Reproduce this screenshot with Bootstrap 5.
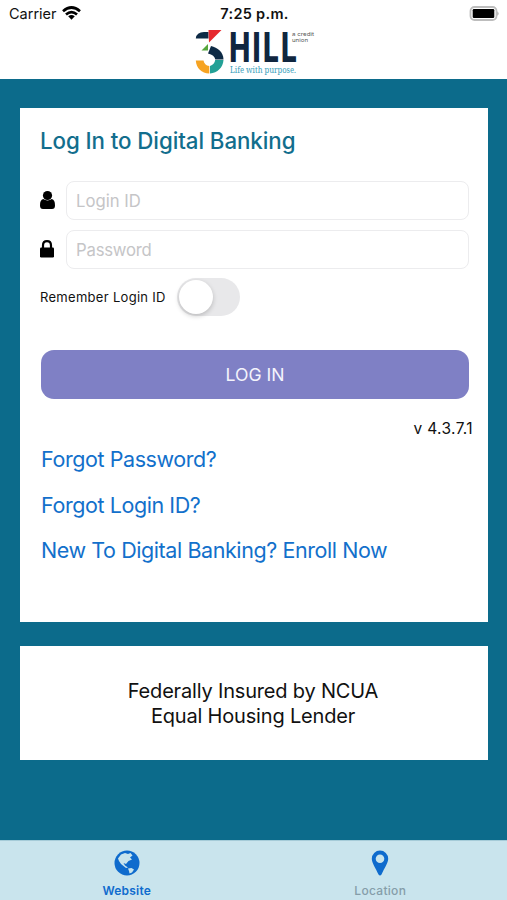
<!DOCTYPE html>
<html lang="en">
<head>
<meta charset="utf-8">
<meta name="viewport" content="width=device-width, initial-scale=1">
<title>Log In to Digital Banking</title>
<link href="https://cdn.jsdelivr.net/npm/bootstrap@5.3.0/dist/css/bootstrap.min.css" rel="stylesheet">
<style>
body{font-family:Inter,"Liberation Sans",sans-serif;background:#0c6b8b;color:#111;height:900px;overflow:hidden}
.top-area{height:79px}
.status-row{height:28px;font-size:14.5px;line-height:28px;padding:0 7px 0 9px}
.status-row>div{flex:1 1 0}
.status-row .battery{margin-top:-2px}
.wifi{margin:-3px 0 0 5px}
.clock{font-weight:600;font-size:14.5px;letter-spacing:.3px}
.brand-logo{display:block;margin:-1px auto 0 192px;overflow:visible}
.page-area{padding:29px 19px 0 20px;height:761px}
.panel{background:#fff}
.login-panel{height:514px;padding:0 19px 0 20px}
.info-panel{height:114px;margin-top:24px;font-size:20px;line-height:24.5px;padding:33px 2px 0 0;letter-spacing:-.18px}
.panel-title{font-size:22.3px;font-weight:500;line-height:30px;padding-top:18px;margin:0 0 25px;color:#126e8d;letter-spacing:-.07px}
.field-row{height:39px;margin-bottom:10px}
.field-icon{width:26px;flex:none}
.field-icon svg{display:block;margin-top:-2px}
.field-input{height:39px;border:1.5px solid #ececee;border-radius:8px;font-size:16.7px;padding:0 8px 0 9px}
.field-input::placeholder{color:#c5c5c7;opacity:1}
.field-pass{letter-spacing:-.2px}
.remember{height:38px;font-size:13px;letter-spacing:.3px;margin-top:-1px}
.remember-text{padding-top:2px}
.toggle{width:63px;height:38px;border-radius:19px;background:#e8e8ea;margin-left:11px;padding:2px}
.knob{width:34px;height:34px;border-radius:50%;background:#fff;box-shadow:0 2px 5px rgba(0,0,0,.2)}
.login-btn,.login-btn:hover{height:49px;background:#7f80c5;color:#f4f4fc;border:0;border-radius:13px;font-size:17.6px;margin:34px 0 0 1px;width:428px;padding-top:8px}
.version{font-size:15.5px;line-height:20px;margin:20px -4px 0 0;letter-spacing:.35px}
.link-list{padding-top:5px}
.link-line{color:#1270cb;font-size:21.5px;line-height:30px;margin:0 0 15.5px 1px;display:block;width:max-content;letter-spacing:-.42px}
.tabs{height:60px;background:#c9e4ed;border-top:1px solid #a5cbd8}
.tab{flex:1 1 0;font-size:12px;line-height:16px;padding-top:9px;letter-spacing:.2px}
.tab svg{display:block;margin:0 auto 7px}
.tab-on{color:#0f6bcd;font-weight:600}
.tab-off{color:#859da9;font-weight:500;letter-spacing:.3px}
</style>
<script src="https://cdn.jsdelivr.net/npm/bootstrap@5.3.0/dist/js/bootstrap.bundle.min.js"></script>
</head>
<body>
<header class="top-area bg-white">
  <div class="status-row d-flex align-items-center">
    <div class="d-flex align-items-center"><span>Carrier</span>
      <svg class="wifi" width="19" height="14" viewBox="0 0 19 14" fill="none" stroke="#000" stroke-width="2.7"><path d="M1 5.2Q9.500-2.200 18 5.200M4 8.600Q9.500 3.800 15 8.600"/><path d="M6.200 10.300Q9.500 7.800 12.800 10.300L9.500 13.700Z" fill="#000" stroke="none"/></svg>
    </div>
    <div class="clock text-center">7:25 p.m.</div>
    <div class="d-flex justify-content-end"><svg class="battery" width="31" height="15" viewBox="0 0 31 15"><rect x="1.500" y="1" width="26" height="13" rx="4" fill="#fff" stroke="#bdbdbd" stroke-width="1.800"/><rect x="3.700" y="3" width="21.600" height="9" rx="1.200"/><path d="M28.300 5.200Q31 7.500 28.300 9.800Z" fill="#aaa"/></svg></div>
  </div>
  <svg class="brand-logo" width="130" height="50" viewBox="192 27 130 50">
    <path d="M195.800 38.500Q196.500 32 204 32H208.500V38.500Z" fill="#0e2a45"/>
    <path d="M208.500 30H221.500L209 42.500Z" fill="#e6282e"/>
    <path d="M201.500 50.500L208 44V50.500Z" fill="#57a63c"/>
    <path d="M211 46C217.500 47.500 223.500 52 223.500 59.500H215.300C214.800 56.500 212.500 54.500 208 53.500Z" fill="#0e2a45"/>
    <path d="M223.500 60C223 67.500 217.500 72.800 210 73.500V66C213 65 214.800 63 215.200 60Z" fill="#22a096"/>
    <path d="M195.800 60.500H203.500C204 63.500 206 65.800 209.300 66V73.500C201.500 73 196.300 68.500 195.800 60.500Z" fill="#f6a322"/>
    <text transform="translate(229.300 62.300) scale(.69 1)" font-family="Inter,sans-serif" font-weight="800" font-size="40.700" letter-spacing="3.300" fill="#10263f">HILL</text>
    <text x="230" y="72.500" font-family="Noto Serif,Liberation Serif,serif" font-size="8.800" fill="#3ba0bb" textLength="66" lengthAdjust="spacingAndGlyphs">Life with purpose.</text>
    <text x="292" y="36.300" font-family="Inter,sans-serif" font-size="5" fill="#555" textLength="22" lengthAdjust="spacingAndGlyphs">a credit</text>
    <text x="292" y="41.800" font-family="Inter,sans-serif" font-size="5" fill="#555" textLength="16" lengthAdjust="spacingAndGlyphs">union</text>
  </svg>
</header>
<main class="page-area">
  <section class="panel login-panel">
    <h1 class="panel-title">Log In to Digital Banking</h1>
    <div class="field-row d-flex align-items-center">
      <div class="field-icon"><svg width="16" height="20" viewBox="0 0 16 20"><path d="M3.200 9C1 9.500 0 11.500 0 15.500Q0 19 3 19H12Q15 19 15 15.500C15 11.500 14 9.500 11.800 9Q7.500 11.800 3.200 9Z"/><circle cx="7.500" cy="5.500" r="4.600"/></svg></div>
      <input class="form-control field-input" placeholder="Login ID" aria-label="Login ID">
    </div>
    <div class="field-row d-flex align-items-center">
      <div class="field-icon"><svg width="14" height="18" viewBox="0 0 14 18"><path d="M3 9V5.500Q3 1.200 7 1.200T11 5.500V9" fill="none" stroke="#000" stroke-width="2.200"/><rect y="7.500" width="14" height="10" rx="1.200"/></svg></div>
      <input type="password" class="form-control field-input field-pass" placeholder="Password" aria-label="Password">
    </div>
    <div class="remember d-flex align-items-center"><span class="remember-text">Remember Login ID</span><div class="toggle"><div class="knob"></div></div></div>
    <button class="btn login-btn">LOG IN</button>
    <div class="version text-end">v 4.3.7.1</div>
    <nav class="link-list">
      <a href="#" class="link-line text-decoration-none">Forgot Password?</a>
      <a href="#" class="link-line text-decoration-none">Forgot Login ID?</a>
      <a href="#" class="link-line text-decoration-none">New To Digital Banking? Enroll Now</a>
    </nav>
  </section>
  <section class="panel info-panel text-center">Federally Insured by NCUA<br>Equal Housing Lender</section>
</main>
<footer class="tabs d-flex text-center">
  <div class="tab tab-on"><svg width="26" height="26" viewBox="0 0 26 26"><circle cx="13" cy="13" r="12.500" fill="#0f6bcd"/><path d="M4 8.500L7 4.500L11 3L14 4L16.500 3L18.500 5.500L16 7.500L18 9.500L14.500 11L12 14L9.500 13L11 15.500L14 17.500L12 18L7 14L5 11ZM14 18.500L17.500 18L20 19.500L18 22.500L15.500 23.500L15 21Z" fill="#c9e4ed"/></svg>Website</div>
  <div class="tab tab-off"><svg width="18" height="26" viewBox="0 0 18 26"><path fill-rule="evenodd" d="M9 .5A8.200 8.200 0 0 0 .8 8.700C.8 12.500 4.500 18 7.500 24.500Q9 26.500 10.500 24.500C13.500 18 17.200 12.500 17.200 8.700A8.200 8.200 0 0 0 9 .5ZM9 4.400A4.300 4.300 0 1 1 9 13A4.300 4.300 0 1 1 9 4.400Z" fill="#0f6bcd"/></svg>Location</div>
</footer>
</body>
</html>
